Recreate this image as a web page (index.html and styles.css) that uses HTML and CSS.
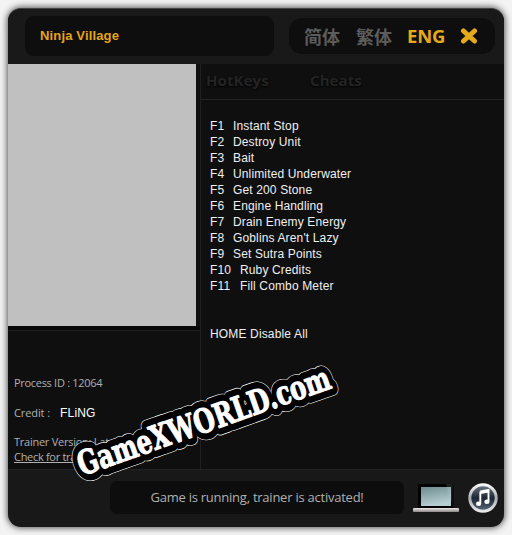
FILE: index.html
```html
<!DOCTYPE html>
<html lang="en">
<head>
<meta charset="utf-8">
<title>Ninja Village</title>
<link rel="stylesheet" href="styles.css">
</head>
<body>
<main class="window">
  <header class="header">
    <h1 class="title">Ninja Village</h1>
    <nav class="languages">
      <span class="cjk">简体</span>
      <span class="cjk">繁体</span>
      <span class="active">ENG</span>
      <svg class="close" viewBox="0 0 18 18"><path d="M3.500 4 14.500 14M14.500 4 3.500 14"/></svg>
    </nav>
  </header>
  <div class="content">
    <aside class="side">
      <div class="cover"></div>
      <div class="info">
        <p class="process">Process ID : 12064</p>
        <p class="credit">Credit :<span class="author">FLiNG</span></p>
        <p class="version">Trainer Version: Lat</p>
        <p class="update">Check for trai</p>
      </div>
    </aside>
    <section class="main">
      <div class="tabs"><span class="hotkeys">HotKeys</span><span>Cheats</span></div>
      <pre class="cheats"><span class="key">F1</span>Instant Stop
<span class="key">F2</span>Destroy Unit
<span class="key">F3</span>Bait
<span class="key">F4</span>Unlimited Underwater
<span class="key">F5</span>Get 200 Stone
<span class="key">F6</span>Engine Handling
<span class="key">F7</span>Drain Enemy Energy
<span class="key">F8</span>Goblins Aren't Lazy
<span class="key">F9</span>Set Sutra Points
<span class="key wide">F10</span>Ruby Credits
<span class="key wide">F11</span>Fill Combo Meter


<span class="home">HOME Disable All</span></pre>
    </section>
  </div>
  <footer class="footer">
    <div class="status">Game is running, trainer is activated!</div>
    <svg class="laptop" viewBox="0 0 48 30">
      <defs><linearGradient id="screen" x1="0" y1="0" x2="0.3" y2="1"><stop offset="0" stop-color="#6f8b8f"/><stop offset="1" stop-color="#b5ced0"/></linearGradient>
      <linearGradient id="base" x1="0" y1="0" x2="0" y2="1"><stop offset="0" stop-color="#eeeaea"/><stop offset="1" stop-color="#8c8585"/></linearGradient></defs>
      <rect x="6" y="1" width="35.500" height="24.500" rx="1.500" fill="#020202"/>
      <rect x="9" y="4" width="30" height="19" fill="url(#screen)"/>
      <path d="M34 1h6.500v21z" fill="#fff" opacity=".12"/>
      <rect x="1" y="25" width="46" height="4" rx="1" fill="url(#base)"/>
    </svg>
    <svg class="music" viewBox="0 0 30 30">
      <defs><linearGradient id="ring" x1="0" y1="0" x2="0" y2="1"><stop offset="0" stop-color="#fff"/><stop offset=".5" stop-color="#a9adb3"/><stop offset="1" stop-color="#eee"/></linearGradient>
      <linearGradient id="disc" x1="0" y1="0" x2="0" y2="1"><stop offset="0" stop-color="#68727e"/><stop offset=".5" stop-color="#1c2632"/><stop offset="1" stop-color="#526273"/></linearGradient></defs>
      <circle cx="15" cy="15" r="14.700" fill="url(#ring)"/>
      <circle cx="15" cy="15" r="11.700" fill="url(#disc)"/>
      <path d="M12.300 8.500 20.500 7V18.500M12.300 8.500V20.500M12.300 10 20.500 8.500" fill="none" stroke="#fff" stroke-width="1.900"/>
      <ellipse cx="10.600" cy="20.700" rx="2.600" ry="2.200" fill="#fff"/><ellipse cx="18.900" cy="18.800" rx="2.600" ry="2.200" fill="#fff"/>
    </svg>
  </footer>
</main>
<svg class="watermark" viewBox="0 0 512 535">
  <g transform="translate(82 476) rotate(-19.400)">
    <text class="dash" textLength="266" lengthAdjust="spacingAndGlyphs">GameXWORLD.com</text>
    <text class="halo" textLength="266" lengthAdjust="spacingAndGlyphs">GameXWORLD.com</text>
    <text class="inner" textLength="266" lengthAdjust="spacingAndGlyphs">GameXWORLD.com</text>
    <text class="letters" textLength="266" lengthAdjust="spacingAndGlyphs">GameXWORLD.com</text>
  </g>
</svg>
</body>
</html>
```
FILE: styles.css
```css
* { box-sizing: border-box; }
body {
  margin: 0;
  width: 512px;
  height: 535px;
  padding: 8px;
  overflow: hidden;
  background: #f3f3f3;
  font-family: "Open Sans", "Noto Sans CJK SC", sans-serif;
}
h1, p, pre { margin: 0; }
.window {
  width: 496px;
  height: 519px;
  display: flex;
  flex-direction: column;
  overflow: hidden;
  border-radius: 13px;
  background: #181818;
  border-top: 1px solid #444;
  box-shadow: 0 0 6px 1px #555;
}
.header {
  height: 55px;
  display: flex;
  align-items: flex-start;
  padding: 7px 0 0 17px;
  background: #191919;
}
.title {
  width: 249px;
  height: 40px;
  padding-left: 15px;
  border-radius: 9px;
  background: #0e0e0e;
  color: #e3a51c;
  font: bold 13px/40px "Liberation Sans", sans-serif;
  letter-spacing: .15px;
}
.languages {
  width: 206px;
  height: 36px;
  display: flex;
  align-items: center;
  margin: 2px 0 0 15px;
  padding-left: 15px;
  border-radius: 13px;
  background: #0e0e0e;
}
.cjk {
  width: 52px;
  color: #5c5c5c;
  font: bold 18px/34px "Noto Sans CJK SC", sans-serif;
}
.active {
  width: 51px;
  margin-left: -1px;
  color: #e5aa1b;
  font: bold 18.5px/38px "Open Sans", sans-serif;
  letter-spacing: -.2px;
}
.close { width: 18px; height: 18px; margin-left: 2px; }
.close path { fill: none; stroke: #e5aa1b; stroke-width: 5; stroke-linecap: round; }
.content { height: 405px; display: flex; }
.side { width: 193px; background: #0f0f0f; border-right: 1px solid #202020; }
.cover {
  width: 188px;
  height: 262px;
  background: #c0c0c0;
}
.info {
  height: 143px;
  padding: 0 0 0 6px;
  border-top: 4px solid #080808;
  color: #b0b0b0;
  font-size: 11px;
  line-height: 15px;
  white-space: nowrap;
  box-shadow: inset 0 1px #202020;
}
.process { padding-top: 45px; letter-spacing: -.3px; }
.credit { padding-top: 15px; letter-spacing: -.1px; }
.author {
  margin-left: 10px;
  color: #fff;
  font: 12px/14px "Liberation Sans", sans-serif;
  letter-spacing: .2px;
}
.version { padding-top: 14px; letter-spacing: -.25px; }
.update { text-decoration: underline; letter-spacing: -.3px; }
.main { flex: 1; background: #0f0f0f; }
.tabs {
  height: 36px;
  padding: 0 0 0 5px;
  border-bottom: 1px solid #252525;
  color: #242424;
  font: bold 15px/32px "Open Sans", sans-serif;
  letter-spacing: .1px;
  text-shadow: 0 1px 2px #000;
}
.hotkeys { display: inline-block; width: 104px; }
.cheats {
  padding: 18px 0 0 9px;
  color: #f0f0f0;
  font: 12px/16px "Liberation Sans", sans-serif;
  letter-spacing: .14px;
}
.key { display: inline-block; width: 23px; }
.wide { width: 30px; }
.home { letter-spacing: .15px; }
.footer {
  height: 58px;
  display: flex;
  align-items: flex-start;
  border-top: 1px solid #222;
  padding: 11px 0 0 102px;
}
.status {
  width: 294px;
  height: 33px;
  border-radius: 7px;
  background: #0d0d0d;
  color: #b0b0b0;
  font-size: 13px;
  line-height: 33px;
  text-align: center;
  letter-spacing: -.24px;
}
.laptop { width: 48px; height: 30px; margin: 2px 0 0 8px; }
.music { width: 30px; height: 30px; margin: 2px 0 0 8px; }
.watermark {
  position: absolute;
  inset: 0;
  width: 512px;
  height: 535px;
}
.watermark text {
  font: bold 33px "DejaVu Serif", serif;
  stroke-linejoin: round;
}
.dash { fill: #000; stroke: #fff; stroke-width: 15.5px; }
.halo { fill: #000; stroke: #000; stroke-width: 14.3px; }
.inner { fill: #000; stroke: #000; stroke-width: 8px; }
.letters { fill: #fff; stroke: #fff; stroke-width: 1.2px; }
```
